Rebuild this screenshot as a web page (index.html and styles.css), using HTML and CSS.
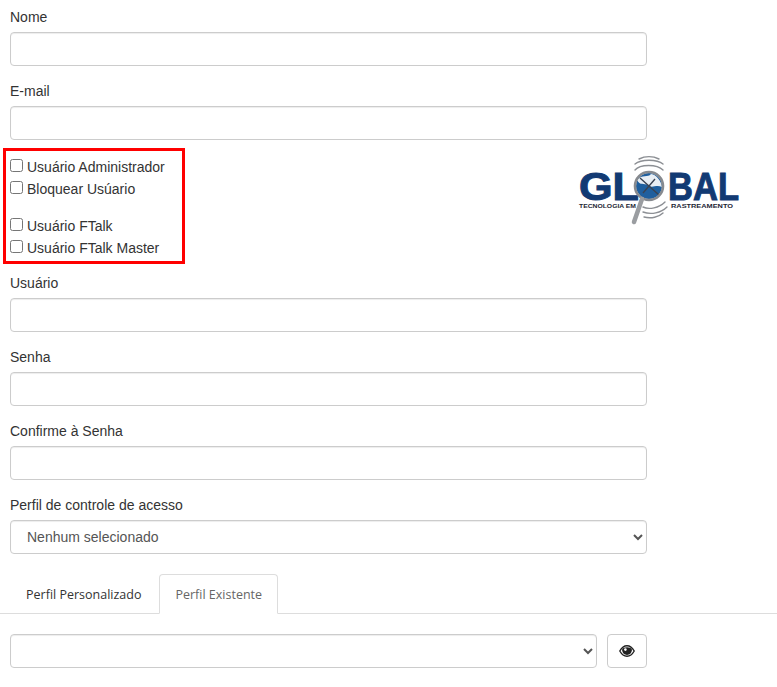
FILE: index.html
```html
<!DOCTYPE html>
<html lang="pt-BR">
<head>
    <meta charset="UTF-8">
    <meta name="viewport" content="width=device-width, initial-scale=1.0">
    <title>Cadastro de Usuário</title>
    <link rel="stylesheet" href="styles.css">
</head>
<body>
    <form class="user-form">
        <div class="field">
            <label for="nome">Nome</label>
            <input type="text" id="nome">
        </div>
        <div class="field">
            <label for="email">E-mail</label>
            <input type="text" id="email">
        </div>

        <div class="options-row">
            <div class="options-box">
                <div class="option-group">
                    <label class="check"><input type="checkbox"> Usuário Administrador</label>
                    <label class="check"><input type="checkbox"> Bloquear Usúario</label>
                </div>
                <div class="option-group">
                    <label class="check"><input type="checkbox"> Usuário FTalk</label>
                    <label class="check"><input type="checkbox"> Usuário FTalk Master</label>
                </div>
            </div>
            <svg class="logo" width="165" height="72" viewBox="0 0 165 72">
                <text class="logo-big" x="2" y="45" textLength="60" lengthAdjust="spacingAndGlyphs">GL</text>
                <text class="logo-big" x="91" y="45" textLength="71" lengthAdjust="spacingAndGlyphs">BAL</text>
                <text class="logo-small" x="2" y="53" textLength="57" lengthAdjust="spacingAndGlyphs">TECNOLOGIA EM</text>
                <text class="logo-small" x="94" y="53" textLength="62" lengthAdjust="spacingAndGlyphs">RASTREAMENTO</text>
                <g fill="none" stroke="#8c8f94" stroke-width="1.4" stroke-linecap="round">
                    <path d="M58 15 C63 9 80 9 86 15"/>
                    <path d="M58 9 C64 4 80 4 86 9"/>
                    <path d="M62 4 C68 1 76 1 82 4"/>
                    <path d="M66 52 C72 55 82 53 88 47"/>
                    <path d="M66 57 C74 60 84 58 90 52"/>
                    <path d="M67 62 C74 64 82 62 86 58"/>
                </g>
                <circle cx="72" cy="31" r="14" fill="#fff"/>
                <circle cx="72" cy="31" r="13" fill="#1f5f9e"/>
                <path d="M60 25 C65 19 71 23 74 19 C80 20 84 26 85 32 C79 29 75 34 71 30 C67 28 63 31 60 25Z" fill="#e8eef4"/>
                <path d="M63 23 L82 40 M66 38 L78 24" stroke="#3a4352" stroke-width="1.4"/>
                <circle cx="72" cy="31" r="14" fill="none" stroke="#878a8f" stroke-width="2.6"/>
                <path d="M65 44 L57 67" stroke="#9a9da1" stroke-width="4.5" stroke-linecap="round"/>
            </svg>
        </div>

        <div class="field">
            <label for="usuario">Usuário</label>
            <input type="text" id="usuario">
        </div>
        <div class="field">
            <label for="senha">Senha</label>
            <input type="password" id="senha">
        </div>
        <div class="field">
            <label for="confirma">Confirme à Senha</label>
            <input type="password" id="confirma">
        </div>
        <div class="field">
            <label for="perfil">Perfil de controle de acesso</label>
            <select id="perfil">
                <option>Nenhum selecionado</option>
            </select>
        </div>
    </form>

    <ul class="tabs">
        <li><a href="#">Perfil Personalizado</a></li>
        <li class="active"><a href="#">Perfil Existente</a></li>
    </ul>

    <div class="profile-row">
        <select class="profile-select">
            <option></option>
        </select>
        <button type="button" class="eye-btn" aria-label="Visualizar perfil">
            <svg width="16" height="12" viewBox="0 0 16 12">
                <path d="M0.8 6 C3 2 5.5 0.8 8 0.8 C10.5 0.8 13 2 15.2 6 C13 10 10.5 11.2 8 11.2 C5.5 11.2 3 10 0.8 6Z" fill="#fff" stroke="#222" stroke-width="1.4"/>
                <path d="M3 4.6 C4.5 1.6 11.5 1.6 13 4.6 C12.5 8.6 10.5 10 8 10 C5.5 10 3.5 8.6 3 4.6Z" fill="#222"/>
                <circle cx="6.4" cy="4.6" r="1.3" fill="#fff"/>
            </svg>
        </button>
    </div>
</body>
</html>
```

FILE: styles.css
```css
* {
    box-sizing: border-box;
}
body {
    font-family: "Liberation Sans", Arial, sans-serif;
    font-size: 14px;
    line-height: 20px;
    color: #333;
    background: #fff;
    margin: 0;
    padding: 7px 0 0;
}
.user-form {
    width: 637px;
    margin-left: 10px;
}
.field {
    margin-bottom: 15px;
}
.field label {
    display: block;
    margin-bottom: 5px;
}
.field input,
.field select,
.profile-select {
    display: block;
    width: 100%;
    height: 34px;
    padding: 6px 12px;
    font-family: inherit;
    font-size: 14px;
    color: #555;
    background-color: #fff;
    border: 1px solid #ccc;
    border-radius: 4px;
    box-shadow: inset 0 1px 1px rgba(0, 0, 0, 0.075);
}
.options-row {
    display: flex;
    justify-content: space-between;
    align-items: flex-start;
    margin: -7px 0 9px -7px;
}
.options-box {
    width: 182px;
    height: 116px;
    padding: 5px 0 0 4px;
    border: 3px solid #f00;
}
.option-group {
    margin-bottom: 15px;
}
.check {
    display: flex;
    align-items: center;
    height: 22px;
    white-space: nowrap;
}
.check input {
    width: 13px;
    height: 13px;
    margin: 0 4px 3px 0;
}
.logo {
    flex: none;
    margin: 7px -95px 0 0;
    overflow: visible;
}
.logo-big {
    font-family: "Liberation Sans", Arial, sans-serif;
    font-weight: bold;
    font-size: 39px;
    fill: #123a73;
    stroke: #123a73;
    stroke-width: 1;
}
.logo-small {
    font-family: "Liberation Sans", Arial, sans-serif;
    font-weight: bold;
    font-size: 6px;
    fill: #1c2533;
}
.tabs {
    display: flex;
    gap: 2px;
    list-style: none;
    margin: 20px 0 0;
    padding: 0 0 0 10px;
    border-bottom: 1px solid #ddd;
    font-family: "Open Sans", sans-serif;
    font-size: 12.5px;
}
.tabs li {
    margin-bottom: -1px;
}
.tabs a {
    display: block;
    height: 40px;
    padding: 10px 15px;
    color: #333;
    text-decoration: none;
    border: 1px solid transparent;
    border-radius: 4px 4px 0 0;
}
.tabs .active a {
    color: #666;
    background: #fff;
    border-color: #ddd #ddd #fff;
}
.profile-row {
    display: flex;
    gap: 10px;
    width: 637px;
    margin: 20px 0 0 10px;
}
.profile-select {
    flex: 1;
}
.eye-btn {
    flex: none;
    display: flex;
    align-items: center;
    justify-content: center;
    width: 40px;
    height: 34px;
    padding: 0;
    background: #fff;
    border: 1px solid #ccc;
    border-radius: 4px;
}
```
